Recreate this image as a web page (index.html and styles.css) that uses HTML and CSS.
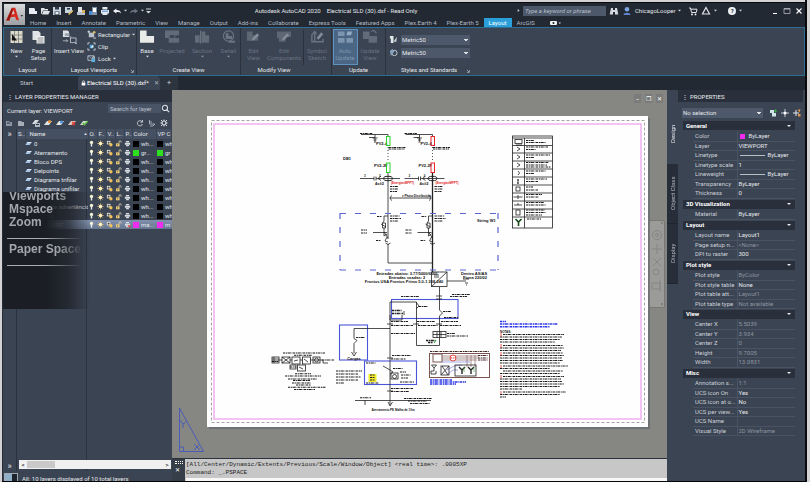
FILE: index.html
```html
<!DOCTYPE html>
<html lang="en">
<head>
<meta charset="utf-8">
<title>Autodesk AutoCAD 2020 - Electrical SLD (30).dxf</title>
<link rel="stylesheet" href="styles.css">
</head>
<body>
<svg class="defs" aria-hidden="true">
  <symbol id="car" viewBox="0 0 4 4"><path d="M0 1h4L2 3.4z"/></symbol>
  <symbol id="bulb" viewBox="0 0 8 8"><circle cx="4" cy="2.8" r="1.9" fill="#f7f3d4"/><path d="M3.2 4h1.6v3.4H3.2z" fill="#e9edf2"/></symbol>
  <symbol id="sun" viewBox="0 0 8 8"><path d="M4 .3v7.4M.3 4h7.4M1.4 1.4l5.2 5.2M6.6 1.4L1.4 6.6" stroke="#d9b66a" stroke-width=".8"/><circle cx="4" cy="4" r="2" fill="#fff2c4"/></symbol>
  <symbol id="vpf" viewBox="0 0 8 8"><path d="M1 1h4v4H1z" fill="#e8e2d0"/><path d="M2 2h2v2H2z" fill="#3b4453"/><circle cx="5.6" cy="5.4" r="1.9" fill="#f3c25a"/></symbol>
  <symbol id="lock" viewBox="0 0 8 8"><path d="M1.2 3.8h4v3.4h-4z" fill="#f0cf7e"/><path d="M4.6 3.6V2a1.2 1.2 0 0 1 2.4 0v1" fill="none" stroke="#e3d6b2" stroke-width=".9"/><path d="M3 4.6v1.6" stroke="#54452a" stroke-width=".7"/></symbol>
  <symbol id="prn" viewBox="0 0 8 8"><path d="M2.2 1h3.6v1.6H2.2zM1 3h6v2.4H1zM2.4 5.8h3.2V7H2.4z" fill="#d8dde4"/></symbol>
  <symbol id="noprn" viewBox="0 0 8 8"><path d="M2.2 1h3.6v1.6H2.2zM1 3h6v2.4H1zM2.4 5.8h3.2V7H2.4z" fill="#d8dde4"/><path d="m4.500 4.500 3 3m0-3-3 3" stroke="#e0392e"/></symbol>
  <symbol id="lay" viewBox="0 0 8 6"><path d="M2.6 1.4h5L5.4 4.6h-5z" fill="#a9c6ea"/><path d="M2.6 1.4h5l-.6.8H2z" fill="#eef5ff"/></symbol>
</svg>

<div class="app">
  <header class="top">
    <button class="logo" aria-label="Application menu"><svg viewBox="0 0 22 23"><path d="M2 18 8.2 4h3.6L16 18l-3.3-.7-1-3.4-5 .6L5.4 18z" fill="#d6291f"/><path d="m7.8 11.6 2-5 1.3 4.4z" fill="#cfd0d2"/><path d="m2 18 6.2-14 .8 2.4L5.4 18z" fill="#96170f"/><path d="M17.5 12h3l-1.5 2z" fill="#333"/></svg></button>
    <div class="titlebar">
      <div class="quick">
        <button aria-label="New"><svg viewBox="0 0 10 10"><path d="M1 2h5l1 1v2h2v3H1z" fill="#e8ecf0"/></svg></button>
        <button aria-label="Open"><svg viewBox="0 0 10 10"><path d="M1 2h3l1 1h3v1.5H3L1.6 8H1zM3.4 5H10L8.4 8.4H2z" fill="#dfe3e8"/></svg></button>
        <button aria-label="Save"><svg viewBox="0 0 10 10"><path d="M1 1h8v8H1z" fill="#c8d3e0"/><path d="M3 1h4v2.6H3zM2.6 5.4h4.8V9H2.6z" fill="#2d3948"/><path d="M3.4 6h3.2v2.4H3.4z" fill="#e8edf2"/></svg></button>
        <button aria-label="Save as"><svg viewBox="0 0 10 10"><path d="M1 1h7v6H1z" fill="#c8d3e0"/><path d="M3 2h3v1.6H3z" fill="#2d3948"/><path d="m4 8 4.4-4 1 1L5.200 9z" fill="#d9b35e"/></svg></button>
        <button aria-label="Open from web"><svg viewBox="0 0 10 10"><path d="M2 1h4v5H2z" fill="#dfe3e8"/><path d="M1 6h8v3H1z" fill="#b9c3cf"/><path d="M6 4h3v3H6z" fill="#d9b35e"/></svg></button>
        <button aria-label="Save to web"><svg viewBox="0 0 10 10"><path d="M4 1h5v8H4z" fill="#7f93aa"/><path d="M5 2h3v4H5z" fill="#fff"/><path d="M1 5h3v4H1z" fill="#4b8ad0"/></svg></button>
        <button aria-label="Plot"><svg viewBox="0 0 10 10"><path d="M2.400 1h5v2.400h-5zM1 4h8v3.400H1zM2.400 6h5v3h-5z" fill="#e4e9ee"/><path d="M2 5.200h6" stroke="#4b8ad0"/></svg></button>
        <button aria-label="Undo"><svg viewBox="0 0 10 10"><path d="M1 5l3.400-2.600v1.600C7 4 9 5 9 7.600 8 6 6.600 5.800 4.400 5.900v1.700z" fill="#eef1f4"/></svg></button>
        <svg class="caret"><use href="#car"/></svg>
        <button class="dim" aria-label="Redo"><svg viewBox="0 0 10 10"><path d="M9 5 5.600 2.400V4C3 4 1 5 1 7.600 2 6 3.400 5.800 5.600 5.900v1.700z" fill="#697382"/></svg></button>
        <svg class="caret"><use href="#car"/></svg>
        <svg class="caret wide" viewBox="0 0 5 6"><path d="M0 .5h5v1H0zM0 3h5L2.500 5.500z"/></svg>
      </div>
      <div class="title"><span>Autodesk AutoCAD 2020</span><span>Electrical SLD (30).dxf - Read Only</span></div>
      <div class="account">
        <svg class="caret" viewBox="0 0 4 4"><path d="M1 0v4l2.400-2z"/></svg>
        <input class="search" type="text" aria-label="Search help" placeholder="Type a keyword or phrase">
        <button aria-label="Find"><svg viewBox="0 0 10 10"><path d="M2 2h2v2h2V2h2l1.300 6.400H6V6H4v2.400H.7z" fill="#d5dae0"/></svg></button>
        <button aria-label="Profile"><svg viewBox="0 0 10 10"><circle cx="5" cy="3.300" r="2.300" fill="#7fa5df"/><path d="M1.500 9c0-3 7-3 7 0z" fill="#5d86cc"/></svg></button>
        <span class="user">ChicagoLooper</span><svg class="caret"><use href="#car"/></svg>
        <button class="cart" aria-label="Cart"><svg viewBox="0 0 10 10"><path d="M1 2h1.500l1 4.500h4.700L9 3.200H3" fill="none" stroke="#e4e8ec"/><circle cx="4" cy="8.400" r=".9" fill="#fff"/><circle cx="7.500" cy="8.400" r=".9" fill="#fff"/></svg></button>
        <button aria-label="App store"><svg viewBox="0 0 10 10"><path d="M5 1.500 8.500 8h-7z" fill="none" stroke="#dfe4ea" stroke-width="1.200"/></svg></button><svg class="caret"><use href="#car"/></svg>
        <button class="help" aria-label="Help">?</button><svg class="caret"><use href="#car"/></svg>
      </div>
      <div class="win">
        <button aria-label="Minimize"><svg viewBox="0 0 8 8"><path d="M2 6.500h4" stroke="#fff"/></svg></button>
        <button aria-label="Restore"><svg viewBox="0 0 8 8"><path d="M1 1.500h6v5H1z" fill="none" stroke="#aeb4bc" stroke-width=".8"/><path d="M1 2h6" stroke="#aeb4bc"/></svg></button>
        <button aria-label="Close"><svg viewBox="0 0 8 8"><path d="m1.500 1.500 5 5m0-5-5 5" stroke="#fff" stroke-width="1.100"/></svg></button>
      </div>
    </div>
    <nav class="tabs">
      <a href="#">Home</a><a href="#">Insert</a><a href="#">Annotate</a><a href="#">Parametric</a><a href="#">View</a><a href="#">Manage</a><a href="#">Output</a><a href="#">Add-ins</a><a href="#">Collaborate</a><a href="#">Express Tools</a><a href="#">Featured Apps</a><a href="#">Plex.Earth 4</a><a href="#">Plex-Earth 5</a><a href="#" class="on">Layout</a><a href="#">ArcGIS</a>
      <button class="cam" aria-label="Ribbon display"><svg viewBox="0 0 12 6"><rect x="1" y="1" width="7" height="4" rx="1" fill="#f0f2f4"/><circle cx="4.500" cy="3" r="1" fill="#222"/><path d="M9.500 2.500h2.500l-1.200 1.500z" fill="#ddd"/></svg></button>
    </nav>
  </header>

  <section class="ribbon">
    <div class="panel p-layout">
      <div class="tools">
        <button class="big"><svg viewBox="0 0 14 14"><path d="M1 1h12v12H1z" fill="#ddd9c8"/><path d="M1 5h12M1 9h12M5 1v12M9 1v12" stroke="#5b6068" stroke-width=".6"/><path d="m2.500 4 5 6.500H2.500z" fill="#111"/></svg>New<svg class="caret"><use href="#car"/></svg></button>
        <button class="big"><svg viewBox="0 0 14 14"><path d="M1 1h6l2 2v7H1z" fill="#dfe3e7"/><path d="M5 6h8v7.500H5z" fill="#f2f2ee"/><path d="M6 8h6M6 10h6M6 12h6" stroke="#6d7682" stroke-width=".8"/></svg>Page<br>Setup</button>
      </div>
      <h2>Layout</h2>
    </div>
    <div class="panel p-viewports">
      <div class="tools">
        <button class="big insert"><svg viewBox="0 0 16 14"><path d="M1 0h5l1.500 1.500V7H1z" fill="#dfe3e7"/><path d="M3 3h5v3H3z" fill="#9ba5b1"/><path d="M9 8h6v5H9zM8 7h2M14 14h2" fill="none" stroke="#d6dbe1" stroke-width=".8"/><path d="M1 11h5M4.500 9.500 6 11l-1.500 1.500" stroke="#d6dbe1" stroke-width=".7" fill="none"/></svg>Insert View</button>
        <div class="stack">
          <button><svg viewBox="0 0 10 10"><path d="M2 3h6v5H2z" fill="#b8c1cc"/><path d="M.5 2h3M2 .5v3M7 9h3" stroke="#fff" stroke-width=".8"/><circle cx="8" cy="2.500" r="1.500" fill="#d8b766"/></svg>Rectangular<svg class="caret"><use href="#car"/></svg></button>
          <button><svg viewBox="0 0 10 10"><path d="M1 3V1h2M7 1h2v2M9 7v2H7M3 9H1V7" stroke="#cfd8e2" fill="none"/><path d="M3 3h4v4H3z" fill="#4fa3d8"/><path d="m4 6 3-3v3z" fill="#fff"/></svg>Clip</button>
          <button><svg viewBox="0 0 10 10"><path d="M1 2h7v5H1z" fill="none" stroke="#b8c1cc"/><path d="m1 2 7 5" stroke="#b8c1cc" stroke-width=".6"/><path d="M5 5h4v4H5z" fill="#5bb0de"/><path d="M6 5V4a1 1 0 0 1 2 0v1" fill="none" stroke="#fff" stroke-width=".7"/></svg>Lock<svg class="caret"><use href="#car"/></svg></button>
        </div>
      </div>
      <h2>Layout Viewports</h2><button class="more" aria-label="Viewport options"><svg viewBox="0 0 4 4"><path d="m1 1 2 2M3.400 1v2.400H1" stroke="#ccd" stroke-width=".6" fill="none"/></svg></button>
    </div>
    <div class="panel p-create">
      <div class="tools">
        <button class="big w20"><svg viewBox="0 0 16 14"><path d="M0 0h7v6h8v7H0z" fill="#e9ebe8"/></svg>Base<svg class="caret"><use href="#car"/></svg></button>
        <button class="big w30" disabled><svg viewBox="0 0 16 14"><path d="M0 0h15v5h-4v3h4v5H4V8H0z" fill="#626b78"/><path d="M5 5h5v3H5z" fill="#3b4453"/></svg>Projected</button>
        <button class="big w30" disabled><svg viewBox="0 0 16 14"><path d="M0 5h5v8H0zM7 1h4v4h4v8H7z" fill="#626b78"/><path d="M6 0v14" stroke="#747d89"/></svg>Section<svg class="caret"><use href="#car"/></svg></button>
        <button class="big w23" disabled><svg viewBox="0 0 16 14"><circle cx="8" cy="6" r="5.500" fill="none" stroke="#6a7380" stroke-width="1.200"/><path d="M5 3h3v3h4v3H5zM8 11h7v2H8z" fill="#6a7380"/></svg>Detail<svg class="caret"><use href="#car"/></svg></button>
      </div>
      <h2>Create View</h2>
    </div>
    <div class="panel p-modify">
      <div class="tools">
        <button class="big w23" disabled><svg viewBox="0 0 16 14"><path d="M1 1h6v4h6v6H1z" fill="#5d6673"/><path d="m7 8 5-5 2 2-5 5-3 1z" fill="#848c97"/></svg>Edit<br>View</button>
        <button class="big w38" disabled><svg viewBox="0 0 16 14"><path d="M0 1h15v6H9v5H2V8H0z" fill="#5d6673"/><path d="m6 8 5-5 2 2-5 5-3 1z" fill="#848c97"/></svg>Edit<br>Components</button>
        <button class="big w28 sep" disabled><svg viewBox="0 0 16 14"><path d="M2 4v8h12V9M5 12V3M2 5l3-4 2 3" stroke="#6a7380" fill="none" stroke-width="1.500"/><path d="m7 8 5-6 2 2-5 6z" fill="#848c97"/></svg>Symbol<br>Sketch</button>
      </div>
      <h2>Modify View</h2>
    </div>
    <div class="panel p-update">
      <div class="tools">
        <button class="big auto" disabled><svg viewBox="0 0 16 14"><path d="M0 1h7v5H0zM0 8h7v5H0zM9 8h7v5H9z" fill="#7d94ae"/><path d="m9 5 1-4h5l-1 4z" fill="#93a9c1"/></svg>Auto<br>Update</button>
        <button class="big w28" disabled><svg viewBox="0 0 16 14"><path d="M0 1h7v5h8v7H6V9H0z" fill="#626b78"/><path d="M9 1a3 3 0 0 1 5 2" stroke="#848c97" fill="none"/></svg>Update<br>View</button>
      </div>
      <h2>Update</h2>
    </div>
    <div class="panel p-styles">
      <div class="styles">
        <label for="sec"><svg viewBox="0 0 10 10"><path d="M1 1h4v8H2V4H1z" fill="#e1e5ea"/><path d="m5 7 4-5-1 6z" fill="#bfc7d0"/></svg></label>
        <select id="sec" aria-label="Section view style"><option>Metric50</option></select>
        <label for="det"><svg viewBox="0 0 10 10"><circle cx="6" cy="5.500" r="3" fill="none" stroke="#cfd6dd"/><path d="m1 3 3-2 2 3-4 5z" fill="#8aa3bd"/></svg></label>
        <select id="det" aria-label="Detail view style"><option>Metric50</option></select>
      </div>
      <h2>Styles and Standards</h2><button class="more" aria-label="Style options"><svg viewBox="0 0 4 4"><path d="m1 1 2 2M3.400 1v2.400H1" stroke="#ccd" stroke-width=".6" fill="none"/></svg></button>
    </div>
  </section>

  <nav class="docs">
    <a href="#" class="start">Start</a>
    <a href="#" class="doc"><svg viewBox="0 0 6 7"><path d="M.8 3h4.400v3.500H.8z" fill="#fff"/><path d="M1.800 3V2a1.200 1.200 0 0 1 2.400 0v1" fill="none" stroke="#fff" stroke-width=".8"/></svg>Electrical SLD (30).dxf*<span class="x">✕</span></a>
    <button class="plus" aria-label="New tab">+</button>
  </nav>

  <main class="work">
    <aside class="layers">
      <h1>LAYER PROPERTIES MANAGER</h1>
      <div class="current"><span>Current layer: VIEWPORT</span>
        <label class="find"><input type="text" aria-label="Search for layer" placeholder="Search for layer"><svg viewBox="0 0 8 8"><circle cx="3.500" cy="3.500" r="2.300" fill="none" stroke="#dfe4ea" stroke-width=".9"/><path d="m5 5 2.200 2.200" stroke="#dfe4ea"/></svg></label></div>
      <div class="bar">
        <button aria-label="New property filter"><svg viewBox="0 0 8 8"><path d="M1 2h3l1 1h2v4H1z" fill="#8b95a1"/><path d="M2 4h3" stroke="#2b323d"/></svg></button>
        <button aria-label="New group filter"><svg viewBox="0 0 8 8"><path d="M1 2h3l1 1h2v4H1z" fill="#a5adb7"/></svg></button>
        <button class="gap" aria-label="Layer states"><svg viewBox="0 0 8 8"><path d="m0 5 3-4h4L4 5z" fill="#d6dbe1"/><path d="M3 4h5v4H3z" fill="#aeb8c4"/><path d="M4 5.500h3" stroke="#333"/></svg></button>
        <button aria-label="New layer"><svg viewBox="0 0 8 8"><path d="m0 6 3-4h5L5 6z" fill="#e2e5e8"/><circle cx="5.500" cy="2.500" r="1.600" fill="#e8923a"/></svg></button>
        <button aria-label="New frozen layer"><svg viewBox="0 0 8 8"><path d="m0 6 3-4h5L5 6z" fill="#e2e5e8"/><circle cx="5.500" cy="3" r="1.600" fill="#4f97dc"/></svg></button>
        <button aria-label="Delete layer"><svg viewBox="0 0 8 8"><path d="m0 6 3-4h5L5 6z" fill="#e2c9c4"/><path d="m4 3 3 3m0-3L4 6" stroke="#e0392e" stroke-width="1.200"/></svg></button>
        <button aria-label="Set current"><svg viewBox="0 0 8 8"><path d="m0 6 3-4h5L5 6z" fill="#c9dcc4"/><path d="m3 4 1.500 2L8 2" stroke="#4fb03a" stroke-width="1.300" fill="none"/></svg></button>
        <button class="push" aria-label="Refresh"><svg viewBox="0 0 8 8"><path d="M6.300 3A2.600 2.600 0 1 0 6.500 5M6.500 1v2.200H4.500" fill="none" stroke="#cdd3da" stroke-width=".9"/></svg></button>
        <button aria-label="Toggle overrides"><svg viewBox="0 0 8 8"><path d="M1.500 1v4H7L5 7H2M1 3h3" fill="none" stroke="#aab3be" stroke-width=".9"/></svg></button>
        <button aria-label="Settings"><svg viewBox="0 0 8 8"><circle cx="4" cy="4" r="2" fill="none" stroke="#d6dbe1" stroke-width="1.200"/><path d="M1 1l1.500 1.500M7 1 5.500 2.500M1 7l1.500-1.500M7 7 5.500 5.500M4 .5V2M4 6v1.500M.5 4H2M6 4h1.500" stroke="#d6dbe1"/></svg></button>
      </div>
      <div class="grid">
        <div class="gutter"><span>»</span><span>»</span></div>
        <div class="list">
          <table>
            <colgroup><col class="c-s"><col class="c-n"><col class="c-i"><col class="c-i"><col class="c-i"><col class="c-i"><col class="c-p"><col class="c-c"><col class="c-v"></colgroup>
            <thead><tr><th>S..</th><th>Name <i>▲</i></th><th>O.</th><th>F..</th><th>V..</th><th>L..</th><th>P..</th><th>Color</th><th>VP C</th></tr></thead>
            <tbody id="layer-rows"></tbody>
          </table>
          <div class="hscroll"><button aria-label="Scroll left">&lt;</button><span class="thumb"></span><button aria-label="Scroll right">&gt;</button></div>
        </div>
      </div>
      <div class="status"><span class="chip"></span>All: 10 layers displayed of 10 total layers</div>
      <div class="overlay"><b>Viewports</b><b>Mspace</b><b>Zoom</b><hr><b>Paper Space</b><hr></div>
    </aside>

    <section class="center">
      <div class="canvas">
        <div class="mdi"><button aria-label="Minimize drawing">–</button><button aria-label="Restore drawing">❐</button><button aria-label="Close drawing">✕</button></div>
        <svg class="paper" viewBox="207 116 441 311" role="img" aria-label="Electrical single line diagram">
          <rect x="207" y="116" width="441" height="311" fill="#fefefe"/>
          <rect x="211.500" y="120.500" width="433" height="302" fill="none" stroke="#8e8e8e" stroke-width=".8" stroke-dasharray="3 2"/>
          <rect x="214" y="124" width="427" height="295" fill="none" stroke="#f0b4f0" stroke-width="1.600"/>
          <text x="343" y="160" class="t4">DB1</text>
          <!-- one photovoltaic string, drawn twice -->
          <defs><g id="string">
            <path d="M361 134.500h27M369 137.500h6M375 134.500v7M372.500 138h5M373.500 140h3M374 142h2" class="k"/>
            <path d="M360 133.500h13" class="scr"/><text x="376" y="145" class="t4">PV2-4</text><text x="374" y="167" class="t4">PV2-2F</text><text x="375" y="185" class="t4">4x#2</text>
            <path d="M388 134.500v2" class="k"/><path d="M388 147v15" class="k" stroke-dasharray="1 2"/>
            <path d="M388.500 147.500h17M388.500 149h16" class="scr"/>
            <path d="M360 178.500h14m2 0h24M374 176.500v4M376 176.500v4M381 176l-3 2.500 3 2" class="k"/><ellipse cx="388" cy="178.500" rx="4.500" ry="2.200" fill="none" stroke="#222"/>
            <text x="364" y="177" class="t3">3</text><text x="379" y="177" class="t3">3</text>
            <text x="391" y="183.500" class="t3 red">(Energia=MPPT)</text>
            <path d="M390 186.500h8M390 189h8M390 191.500h7" class="scr"/>
            <path d="M388 216h-4v5l-1.500 2h3v5h-3v-5m1.500 5v4l4 6M381 224l5 3M373 232.500h14M384 232v4l3-2M387 237l-2 4 3 1" class="k"/>
            <path d="M377 216.500h5M376 240.500h5M390 216h10M390 218.500h11M390 221h8" class="scr"/><path d="M361 230h6M361 233h6" class="scr"/>
            <path d="M385.500 243q2.500 3 5 0" class="k"/>
          </g></defs>
          <use href="#string"/><use href="#string" x="44.500"/>
          <g fill="none" stroke="#2fcf2f"><rect x="386.500" y="136.500" width="3.500" height="9"/><rect x="386.500" y="163" width="3.500" height="9.500"/></g>
          <g fill="none" stroke="#e8272b"><rect x="431" y="136.500" width="3.500" height="9"/><rect x="431" y="163" width="3.500" height="9.500"/></g>
          <path d="M388 173v66M388 244v19h45" class="k"/><path d="M432.500 173v99" stroke="#222" stroke-width="1.300"/>
          <path d="M390 198h41M392 195.500q-4 2.500 0 5M429 195.500q4 2.500 0 5" class="k"/><text x="402" y="196.500" class="t3">≥ Photo Distribuição</text>
          <path d="M340 213.500h158M340 270h158" class="blue" stroke-dasharray="6 9"/><path d="M340 213v57M498 213v57" class="blue" stroke-dasharray="6 8"/>
          <text x="477" y="222" class="t4">String W1</text>
          <text x="407" y="274.500" class="t4 mid">Entradas abaixo: 3.77/5000/6000</text>
          <text x="407" y="278.800" class="t4 mid">Entradas usadas: 2</text>
          <text x="404" y="283" class="t4 mid">Fronius USA Fronius Primo 5.0-1 208-240</text>
          <rect x="431.500" y="272" width="15.500" height="14.500" class="k"/><path d="M431.500 286.500 447 272M434 275h5m-5 2h5M447 281h19M463 279h6M465 283h3M466 285h1" class="k"/>
          <text x="461" y="275" class="t4">Dentro AS/AS</text><text x="463" y="279" class="t4">Fiona 220/02</text>
          <!-- protection and distribution -->
          <g class="blueb"><rect x="391.500" y="299.500" width="66.500" height="19"/><rect x="339.500" y="325" width="28" height="35"/><rect x="364.500" y="361" width="52" height="23.500"/></g>
          <path d="M439.500 287v23l3 3-3 3v29.500h-23V302H390v103M416 302l3 4-3 3M390 315v5h12v-5M404 311v4M390 328.500h-36v10l3 2-3 3v10M351.500 352l2.500 4 2.500-4M388 402l2 4 2.500-4M355 400.500h76M365 400v5M383 366l7 4 3 2-3 2" class="k"/>
          <path d="M401 296.500h18M450 296.500h17M452 294.500h18M419 306.500h9M443 311.500h8M444 317.500h14" class="scr"/>
          <path d="M392 310.500h10M392 313.500h11" class="scr b"/><path d="M391 321.500h17M417 321.500h18M441 321.500h17M391 325.500h22M418 325.500h20M440 325.500h21M391 333.500h24" class="scr"/>
          <rect x="433" y="331.500" width="13" height="6" class="k"/><path d="M433 334.500h13M437 331.500v6M441 331.500v6" class="k"/><path d="M447 333.500h8M447 336h21" class="scr"/><path d="M426 340.500h10M428 342.500h5" class="scr b"/><path d="M434 343l2-3" stroke="#2a9f3a"/>
          <path d="M436 296h6M436 299h6M436 324h6M387 324h6M387 358h6M387 391h6M413 324h6" class="k"/>
          <path d="M356 337.500h9M392 355.500h19M391 359h15M393 368.500h10M391 388.500h22M391 391.500h18" class="scr"/>
          <text x="354" y="359.500" class="t4 mid">Cargas</text>
          <path d="M366 363h10" class="scr"/><rect x="368.500" y="374" width="8" height="8" fill="#f3ec30"/><path d="M370 375h5M370 377.500h5M370 380h5" class="scr"/><path d="M366 383h13" class="scr"/>
          <rect x="391" y="373" width="7" height="6" class="k"/><path d="M400 372h6M401 375h10M401 378h7M400 382h14" class="scr"/><circle cx="394.500" cy="376.500" r="2" class="k"/>
          <path d="M336 371h26M336 374h22M336 377h25M336 380h22M336 383h8" class="scr"/>
          <path d="M360 397.800h11M404 398.500h28M408 401h19M410 403.500h20" class="scr"/><text x="393" y="411" class="t3 mid">Aterramento PE Malha de 10m</text>
          <!-- left block diagram -->
          <path d="M283 353h42M294 355.200h18M285 376h36M295 373.700h16M288 379h29M296 385h15M288 387.300h38M294 389.500h21" class="scr"/>
          <g class="k"><rect x="272" y="357" width="7" height="6"/><path d="M272 359h7m-7 2h7m-5-4v6"/><rect x="282" y="357" width="8" height="6"/><path d="m282 357 8 6m0-6-8 6"/><rect x="292" y="357" width="8" height="7"/><rect x="302.500" y="357" width="8" height="7"/><rect x="313" y="357" width="7" height="6"/><circle cx="316.500" cy="360" r="2"/><rect x="290" y="365" width="6" height="4"/><rect x="297.500" y="365" width="8" height="6"/><path d="M279 360h3m8 0h2m8 0h2.500m8 0H323v3h5M294 361l4-1M304 359l4 3M299 367l4 2"/></g>
          <path d="M322 360h12M272 361.500h6M290 367h6M293 380.500h17M292 383h19" class="scr"/>
          <!-- motor schematic -->
          <path d="M430 351.500h59" class="scr brown"/><g fill="none" stroke="#7d5650"><rect x="429.500" y="353.500" width="60" height="24"/><rect x="433" y="354" width="9" height="8"/><path d="M442 356h37M442 358h37M442 360h35M467 355v12M471 355v12M475 355v12" stroke-width=".6"/></g>
          <circle cx="453" cy="358" r="3" fill="#fff" stroke="#e34840"/><path d="M450 358h6" class="scr red-s"/><path d="M478 355.500h10M478 358h10M478 360h10" class="scr brown"/><path d="M442 362h28M447 370l7-4 8-1M448 374l5-4h5" stroke="#6674e0" stroke-width=".6" fill="none"/>
          <g class="k"><path d="M431.500 365h5l-2.500 3zM434 368v3h-3v3h5v-3"/><rect x="441" y="366" width="8" height="9"/><path d="m441 375 8-9m-7 0 6 9"/><rect x="455" y="365" width="21" height="11"/><path d="m459 367 3 3 3-3m-3 3v4m6-7 3 3 3-3m-3 3v4" stroke-width="1.400"/></g><path d="M464 367v5M474 367v5" stroke="#49b04c" stroke-width=".7"/>
          <path d="M430 380h22M430 382h36M430 384h26" class="scr b bluet"/>
          <!-- symbol legend -->
          <g class="k"><rect x="512.500" y="136" width="40" height="92"/><path d="M512.500 138h40M512.500 145.500h40m-40 7.500h40m-40 8h40m-40 8h40m-40 8h40m-40 8h40m-40 8h40m-40 8h40m-40 8h40m-40 8h40M524.500 138v90"/><rect x="515" y="139.500" width="7" height="4"/><path d="M516 145h6M517 147l3 2-3 2M517 155l3 2-3 2M517 163l3 2-3 2M518 171q3 2 0 4M518 179v5m-1-4h2m-2 3h2M513.500 197h9M518 195v4M514 205h8M517 204h2"/><rect x="516" y="187" width="4" height="4"/><rect x="516" y="210" width="4" height="5"/></g>
          <path d="M526 140.500h8M526 142.500h20M526 147h22M526 149.500h10M526 155h24M526 157.500h8M526 162.500h23M526 165h21M526 167h25M526 171h20M526 173.500h8M526 179h21M526 181.500h12M526 187h7M526 190h12M526 194.500h16M526 197h13M526 202.500h18M526 205h20M526 210h19M526 212.500h20M526 215h16M527 219h14" class="scr"/><path d="m515.500 219 3 3 3-3m-3 3v4" stroke="#164a1a" stroke-width="1.600" fill="none"/>
          <!-- notes column -->
          <path d="M500 321.500h6M500 324h58M500 326.700h50" class="scr b bluet"/>
          <text x="500" y="332.500" class="t3">NOTAS:</text>
          <g class="scr"><path d="M503 334.500h61M500 337h62M500 339.500h60M500 342h55M503 345.500h60M500 348h64M500 350.500h61M503 353h60M500 355.500h64M500 358h62M500 360.500h63M500 363h60M503 366h65M500 368.500h50M503 371h60M500 373.500h60M503 376.500h61M500 379h61M500 381.500h62M500 384h64M500 386.500h60M500 389h22M503 392h63M500 394.500h60M500 397h6"/></g>
          <path d="M501 333v4M501 344v4M501 352v4M501 365v3M501 375v3M501 391v3" stroke="#e34840" stroke-width=".9"/>
        </svg>
        <svg class="ucs" viewBox="0 0 28 46"><path d="M1.500 1v43.500h24zM1.500 40h4v4.500M2 13l3 4m4-3-4 3v4M16 37l6 6m0-6-6 6" fill="none" stroke="#4a5cb8"/></svg>
        <svg class="navbar" viewBox="0 0 16 88"><rect x=".5" y=".5" width="15" height="87" rx="1.500" fill="#9b9b99" stroke="#777"/><g fill="none" stroke="#868684"><circle cx="8" cy="15" r="4.500"/><circle cx="8" cy="15" r="1.500"/><path d="M8 24v10M3 29h10M4 38l8 8m0-8-8 8M3 63h8v6H3zM11 60v12"/><circle cx="7" cy="52" r="3"/></g><circle cx="13" cy="3" r="1" fill="#777"/><circle cx="13" cy="84" r="1" fill="#777"/></svg>
      </div>
      <div class="command">
        <div class="grip"><i></i>✕</div>
        <div class="lines"><p>[All/Center/Dynamic/Extents/Previous/Scale/Window/Object] &lt;real time&gt;: .0005XP</p><p>Command: _.PSPACE</p><input type="text" aria-label="Command line"></div>
      </div>
    </section>

    <aside class="props">
      <div class="sidetabs"><button class="on">Design</button><button>Object Class</button><button>Display</button></div>
      <div class="pbody">
        <h1>PROPERTIES</h1>
        <div class="pick">
          <select aria-label="Selection"><option>No selection</option></select>
          <button aria-label="Toggle pick add"><svg viewBox="0 0 8 8"><path d="M1 1h4v3H1zM3 4h4v3.500H3z" fill="#cfe4ea"/><path d="M5 2h3M6.500.5v3" stroke="#3fae47" stroke-width="1.200"/></svg></button>
          <button aria-label="Select objects"><svg viewBox="0 0 8 8"><path d="M4 0v8M0 4h8" stroke="#e4e8ec" stroke-width=".8"/><circle cx="4" cy="4" r="1.500" fill="#fff"/></svg></button>
          <button aria-label="Quick select"><svg viewBox="0 0 8 8"><path d="M3 1v6M0 4h6" stroke="#e4e8ec"/><path d="M4.500.5h3l-1 3zM5 5h2.500v2.500H5z" fill="#e09a4a"/></svg></button>
        </div>
        <table>
          <colgroup><col class="g"><col class="k1"><col></colgroup>
          <tbody><tr><th colspan="3">General<i></i></th></tr>
            <tr><td></td><td>Color</td><td><span class="sw"></span>ByLayer</td></tr><tr><td></td><td>Layer</td><td>VIEWPORT</td></tr><tr><td></td><td>Linetype</td><td><span class="ln"></span>ByLayer</td></tr><tr><td></td><td>Linetype scale</td><td>1</td></tr><tr><td></td><td>Lineweight</td><td><span class="ln"></span>ByLayer</td></tr><tr><td></td><td>Transparency</td><td>ByLayer</td></tr><tr><td></td><td>Thickness</td><td>0</td></tr></tbody>
          <tbody><tr><th colspan="3">3D Visualization<i></i></th></tr><tr><td></td><td>Material</td><td>ByLayer</td></tr></tbody>
          <tbody><tr><th colspan="3">Layout<i></i></th></tr><tr><td></td><td>Layout name</td><td>Layout1</td></tr><tr><td></td><td>Page setup n...</td><td class="off">&lt;None&gt;</td></tr><tr><td></td><td>DPI to raster</td><td>300</td></tr></tbody>
          <tbody><tr><th colspan="3">Plot style<i></i></th></tr><tr><td></td><td>Plot style</td><td class="off">ByColor</td></tr><tr><td></td><td>Plot style table</td><td>None</td></tr><tr><td></td><td>Plot table att...</td><td class="off">Layout1</td></tr><tr><td></td><td>Plot table type</td><td class="off">Not available</td></tr></tbody>
          <tbody><tr><th colspan="3">View<i></i></th></tr><tr><td></td><td>Center X</td><td class="off">5.5039</td></tr><tr><td></td><td>Center Y</td><td class="off">3.934</td></tr><tr><td></td><td>Center Z</td><td class="off">0</td></tr><tr><td></td><td>Height</td><td class="off">9.7005</td></tr><tr><td></td><td>Width</td><td class="off">13.0831</td></tr></tbody>
          <tbody><tr><th colspan="3">Misc<i></i></th></tr><tr><td></td><td>Annotation s...</td><td class="off">1:1</td></tr><tr><td></td><td>UCS icon On</td><td>Yes</td></tr><tr><td></td><td>UCS icon at o...</td><td>No</td></tr><tr><td></td><td>UCS per view...</td><td>Yes</td></tr><tr><td></td><td>UCS Name</td><td></td></tr><tr><td></td><td>Visual Style</td><td class="off">2D Wireframe</td></tr></tbody>
        </table>
      </div>
    </aside>
  </main>
</div>
<script src="layers.js"></script>
</body>
</html>
```
FILE: layers.js
```js
// Rows of the layer table: name, swatch class, colour label, viewport colour label
const layers = [
  ["0", "", "wh...", "wh"],
  ["Aterramento", "green", "gr...", "gr"],
  ["Bloco DPS", "", "wh...", "wh"],
  ["Delpoints", "", "wh...", "wh"],
  ["Diagrama trifilar", "", "wh...", "wh"],
  ["Diagrama unifilar", "", "wh...", "wh"],
  ["", "", "wh...", "wh"],
  ["Placa de advertência", "", "wh...", "wh"],
  ["Projeto", "", "wh...", "wh"],
  ["VIEWPORT", "magenta", "ma...", "m"]
];
const icon = id => `<svg class="ic"><use href="#${id}"/></svg>`;
document.getElementById("layer-rows").innerHTML = layers.map(([name, cls, color, vp]) => {
  const current = name === "VIEWPORT";
  const flags = ["bulb", "sun", "vpf", "lock", current ? "noprn" : "prn"];
  return `<tr class="${current ? "sel" : ""}"><td></td><td>${icon("lay")}${name}</td>` +
    flags.map(i => `<td>${icon(i)}</td>`).join("") +
    `<td><span class="swatch ${cls}"></span>${color}</td><td><span class="swatch ${cls}"></span>${vp}</td></tr>`;
}).join("");
```
FILE: styles.css
```css
:root {
  --dark: #222933;
  --panel: #3b4453;
  --head: #29303c;
  --field: #4d586b;
  --text: #e3e6ea;
}
* { box-sizing: border-box; }
html, body { height: 100%; }
body {
  margin: 0;
  background: #d5d2d5;
  color: var(--text);
  font: 6px/8px Roboto, "Open Sans", sans-serif;
  overflow: hidden;
}
button, input, select { font: inherit; color: inherit; margin: 0; padding: 0; border: 0; background: none; border-radius: 0; outline: 0; }
button { display: inline-flex; align-items: center; justify-content: center; }
a { color: inherit; text-decoration: none; }
h1, h2, p { margin: 0; font-size: 6px; font-weight: normal; }
svg { display: block; flex: none; }
.defs { position: absolute; width: 0; height: 0; }
.caret { width: 3px; height: 3px; fill: #d0d5db; }
.caret.wide { width: 5px; height: 6px; }

.app { height: 100vh; margin: 0 3px 0 2px; padding-top: 2px; border-right: 2px solid #0a0a0c; border-bottom: 1px solid #050506; background: var(--dark); background-clip: content-box; display: flex; flex-direction: column; overflow: hidden; }

/* title bar and ribbon tabs */
.top { display: grid; grid-template: 15px 9px / 25px 1fr; background: var(--dark); border-top: 1px solid #08090b; flex: none; }
.logo { grid-row: 1 / 3; margin: 1px 2px; width: 21px; height: 21px; background: linear-gradient(#dadbdc, #9b9ea2); }
.logo svg { width: 21px; height: 21px; }
.titlebar { display: flex; align-items: center; }
.quick { display: flex; align-items: center; gap: 2px; width: 128px; padding-left: 1px; }
.quick button, .account button { width: 10px; height: 10px; }
.quick button svg, .account button svg { width: 10px; height: 10px; }
.title { flex: 1; display: flex; justify-content: center; gap: 6px; white-space: nowrap; }
.account { display: flex; align-items: center; gap: 3px; width: 225px; }
.search { width: 88px; height: 10px; background: var(--field); padding: 0 2px; font-style: italic; }
.search::placeholder, .find input::placeholder { color: #b9c0ca; opacity: 1; }
.account .cart { margin-left: 4px; }
.account .help { width: 8px; height: 8px; border-radius: 50%; background: #eceff2; color: #222933; font-weight: bold; margin-left: 8px; }
.win { display: flex; gap: 4px; width: 63px; justify-content: flex-end; padding-right: 2px; }
.win svg { width: 8px; height: 8px; }
.tabs { display: flex; align-items: center; padding-left: 3px; gap: 10px; color: #b4bac2; line-height: 9px; white-space: nowrap; }
.tabs .on { background: #2b9fda; color: #fff; padding: 0 5px; margin: 0 -5px; }
.cam svg { width: 12px; height: 6px; }
.cam { margin-left: 4px; }

/* ribbon */
.ribbon { display: flex; height: 49px; background: var(--panel); border: 1px solid #2d6d92; flex: none; margin-left: 1px; }
.panel { position: relative; display: flex; flex-direction: column; border-right: 1px solid #2b323e; flex: none; }
.p-layout { width: 48px; } .p-viewports { width: 85px; } .p-create { width: 104px; } .p-modify { width: 91px; } .p-update { width: 54px; } .p-styles { width: 86px; border: 0; }
.tools { display: flex; flex: 1; padding-top: 2px; justify-content: center; }
.panel h2 { text-align: center; line-height: 10px; color: #e6e9ec; flex: none; }
.p-modify h2 { padding-right: 24px; }
.big { flex-direction: column; justify-content: flex-start; width: 22px; line-height: 7px; white-space: nowrap; }
.big > svg:first-child { width: 15px; height: 14px; margin-bottom: 3px; }
.big:disabled { color: #697280; }
.big:disabled .caret { fill: #8b939e; }
.big .caret { margin-top: 1px; }
.big.insert { width: 32px; }
.w20 { width: 20px; } .w23 { width: 23px; } .w28 { width: 27px; } .w30 { width: 30px; } .w38 { width: 38px; }
.sep { border-left: 1px solid #2b323e; }
.auto { width: 23px; height: 34px; background: #4a6684; outline: 1px solid #5f93bf; }
.auto:disabled { color: #7f96ae; }
.stack { display: flex; flex-direction: column; align-items: flex-start; gap: 3px; padding-left: 2px; }
.stack button { gap: 2px; height: 9px; }
.stack button > svg:first-child { width: 9px; height: 9px; }
.more { position: absolute; right: 2px; bottom: 2px; }
.more svg { width: 4px; height: 4px; }
.styles { flex: 1; display: grid; grid-template-columns: 10px 1fr; gap: 3px 2px; align-content: center; padding: 0 2px 0 3px; }
.styles svg { width: 9px; height: 9px; }
select { appearance: none; }
.styles select, .pick select {
  height: 10px; padding: 0 1px; min-width: 0;
  background: linear-gradient(45deg, transparent 50%, #dde1e6 0) no-repeat right 4px center / 2px 2px, linear-gradient(-45deg, transparent 50%, #dde1e6 0) no-repeat right 2px center / 2px 2px, var(--field);
}

/* document tabs */
.docs { display: flex; height: 14px; align-items: stretch; line-height: 14px; background: var(--dark); flex: none; margin-left: 1px; }
.docs .start { width: 75px; padding-left: 17px; background: #272f3a; color: #c3c8cf; }
.docs .doc { display: flex; align-items: center; gap: 1px; width: 82px; padding-left: 3px; background: var(--panel); color: #fff; white-space: nowrap; border-radius: 3px 3px 0 0; }
.docs .doc svg { width: 5px; height: 6px; }
.docs .x { margin-left: 4px; color: #aeb6c0; }
.plus { width: 18px; background: #2c3440; color: #c3c8cf; font-size: 8px; }

.work { flex: 1; min-height: 0; display: flex; }

/* layer manager */
.layers { position: relative; width: 170px; flex: none; display: flex; flex-direction: column; background: var(--panel); border-left: 1px solid #262d38; overflow: hidden; }
.layers h1, .props h1 { height: 12px; line-height: 13px; background: var(--head); padding-left: 4px; white-space: nowrap; color: #eceef0; flex: none; }
.layers h1::before, .props h1::before { content: "⋮"; margin-right: 2px; }
.current { display: flex; justify-content: space-between; padding: 2px 1px 0 4px; height: 15px; white-space: nowrap; flex: none; }
.current span { padding-top: 3px; }
.find { display: flex; width: 63px; height: 9px; }
.find input { width: 53px; background: #4a5467; padding: 0 2px; }
.find svg { width: 9px; height: 9px; }
.bar { display: flex; gap: 4px; padding: 1px 4px 0 2px; height: 12px; flex: none; }
.bar svg { width: 8px; height: 8px; }
.bar button { height: 9px; }
.bar .gap { margin-left: 3px; }
.bar .push { margin-left: auto; }
.grid { flex: 1; min-height: 0; display: flex; }
.gutter { width: 14px; display: flex; flex-direction: column; justify-content: space-between; align-items: center; padding: 1px 0 1px; border-right: 1px solid #2b323e; font-size: 9px; flex: none; }
.list { flex: 1; min-width: 0; display: flex; flex-direction: column; justify-content: space-between; background: linear-gradient(#2b323e, #2b323e) no-repeat 69px 0 / 1px 100%; }
table { border-collapse: collapse; table-layout: fixed; width: 100%; }
td, th { padding: 0; text-align: left; font-weight: normal; white-space: nowrap; overflow: hidden; }
.c-s { width: 8px; } .c-n { width: 63px; } .c-i { width: 9px; } .c-p { width: 8px; } .c-c { width: 24px; } .c-v { width: auto; }
.list th { height: 10px; background: #465063; padding-left: 1px; border-right: 1px solid #3b4453; }
.list th i { float: right; font-size: 4px; font-style: normal; }
.list th:nth-child(2) { padding-left: 4px; }
.list td { height: 9px; }
.list .ic { display: inline-block; width: 7px; height: 7px; vertical-align: middle; }
.list td:nth-child(2) .ic { margin: 0 2px 0 -4px; }
.list td:nth-child(2) { padding-left: 4px; }
.sel { background: linear-gradient(#8191ad, #67768f); }
.swatch { display: inline-block; width: 6px; height: 6px; background: #000; margin: 0 2px 0 1px; vertical-align: middle; }
.swatch.green { background: #2ce01e; }
.swatch.magenta { background: #f02cf0; }
.hscroll { display: flex; align-items: center; height: 9px; margin: 0 1px 2px 2px; background: #f0f0f0; color: #333; flex: none; }
.hscroll button { width: 8px; font-weight: bold; }
.hscroll .thumb { width: 28px; height: 7px; background: #c9c9c9; margin-right: auto; }
.status { display: flex; gap: 4px; height: 10px; overflow: hidden; padding-left: 1px; flex: none; white-space: nowrap; line-height: 15px; }
.chip { width: 14px; height: 12px; margin-top: 2px; border: 1px solid #a0a8b2; background: linear-gradient(90deg, #8fb0c6 60%, #1d232c 0); }
.overlay { position: absolute; left: -1px; top: 102px; width: 88px; height: 117px; padding-left: 7px; background: linear-gradient(90deg, #1b1e24 50%, rgba(27, 30, 36, .7) 75%, rgba(27, 30, 36, 0)); color: #a3a6aa; font: bold 12px/13px "Liberation Sans", sans-serif; overflow: hidden; }
.overlay b { display: block; margin-top: -2px; margin-bottom: 2px; white-space: nowrap; -webkit-mask: linear-gradient(90deg, #000 60%, transparent 92%); mask: linear-gradient(90deg, #000 60%, transparent 92%); }
.overlay hr { height: 1px; margin: 9px 8px 6px -2px; border: 0; background: linear-gradient(90deg, #aaacb0 50%, transparent); }

/* drawing area */
.center { flex: 1; min-width: 0; display: flex; flex-direction: column; }
.canvas { position: relative; flex: 1; min-height: 0; padding: 26px 19px 0 35px; background: #868683; overflow: hidden; }
.paper { width: 100%; box-shadow: 2px 2px 0 #6e7274; }
.mdi { position: absolute; top: 4px; right: 4px; display: flex; gap: 4px; color: #fff; }
.mdi button { width: 7px; height: 9px; background: #7b7c79; }
.ucs { position: absolute; left: 6px; bottom: 5px; width: 28px; height: 46px; }
.navbar { position: absolute; right: 2px; top: 130px; width: 16px; height: 88px; }
.k { fill: none; stroke: #222; stroke-width: .8; }
.scr { fill: none; stroke: #1c1c1c; stroke-width: 1.1; stroke-dasharray: 2.4 .7 1.2 .5 3 .8 .8 .5; }
.scr.b { stroke-width: 1.5; }
.scr.brown { stroke: #3c2320; }
.scr.red-s { stroke: #e34840; }
.scr.bluet { stroke: #2b36e6; }
.blue { stroke: #5a66cc; fill: none; stroke-width: 1.2; }
.blueb { stroke: #4b55d8; fill: none; stroke-width: 1.1; }
.t4 { font: bold 4px "Liberation Sans", sans-serif; fill: #111; }
.t3 { font: bold 3px "Liberation Sans", sans-serif; fill: #111; }
.red { fill: #e02020; }
.mid { text-anchor: middle; }

/* command line */
.command { display: flex; height: 23px; border-top: 1px solid #2b323e; background: #c6c7c6; flex: none; }
.grip { width: 13px; background: #363e4a; padding: 2px 0 0 3px; color: #fff; }
.grip i { display: block; height: 3px; margin-bottom: 2px; border-top: 1px dotted #fff; border-bottom: 1px dotted #fff; width: 8px; }
.lines { flex: 1; padding: 2px 0 0 1px; color: #1c1c1c; font-family: "Liberation Mono", monospace; }
.lines input { display: block; width: 100%; height: 5px; background: #f7f7f7; margin-top: 1px; }

/* properties palette */
.props { width: 138px; flex: none; display: flex; background: var(--panel); }
.sidetabs { width: 11px; padding-top: 14px; display: flex; flex-direction: column; flex: none; }
.sidetabs button { writing-mode: vertical-rl; transform: rotate(180deg); width: 11px; height: 60px; background: #272e39; color: #aeb5bf; border-top: 1px solid #1f252e; line-height: 11px; }
.sidetabs .on { background: var(--panel); color: #e0e4e8; border: 0; }
.pbody { flex: 1; min-width: 0; }
.pbody h1 { margin: 0 2px 0 0; }
.pick { display: flex; align-items: center; padding: 6px 4px 1px 4px; gap: 4px; }
.pick select { width: 81px; margin-right: 2px; }
.pick svg { width: 8px; height: 8px; }
.props table { width: calc(100% - 15px); margin: 1px 0 0 5px; }
.props .g { width: 10px; } .props .k1 { width: 44px; }
.props td { height: 9px; border-bottom: 1px solid #4a5361; padding-left: 2px; line-height: 8px; color: #cbd0d7; }
.props tr:nth-child(even) td { height: 10px; }
.props td:first-child { border: 0; }
.props td:last-child { border-left: 1px solid #4a5361; padding-left: 1px; color: #e6e9ec; }
.props td.off:last-child { color: #8d95a0; }
.props th { height: 11px; line-height: 8px; background: linear-gradient(#29303c, #29303c) no-repeat 0 1px / 100% 9px; font-weight: bold; padding-left: 3px; color: #fff; }
.props th i { float: right; margin: 3px 4px 0 0; border: 2px solid transparent; border-top-color: #e8eaec; border-bottom: 0; }
.sw { display: inline-block; width: 5px; height: 5px; margin: 0 4px 0 1px; background: #f02cf0; vertical-align: middle; }
.ln { display: inline-block; width: 25px; height: 1px; margin: 0 3px 0 1px; background: #b9bfc7; vertical-align: middle; }
```
